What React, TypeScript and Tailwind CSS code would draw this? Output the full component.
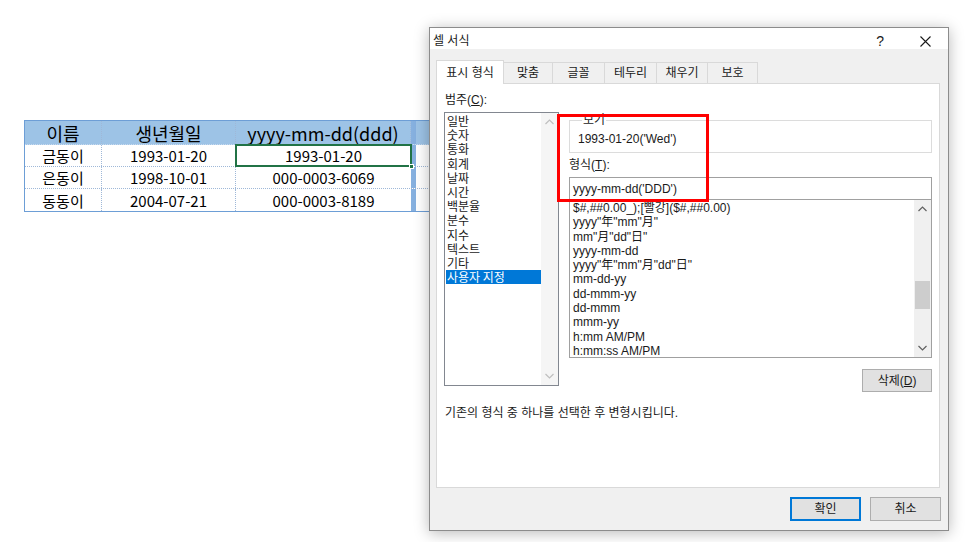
import type { ReactNode } from 'react';

const categories = ['일반', '숫자', '통화', '회계', '날짜', '시간', '백분율', '분수', '지수', '텍스트', '기타', '사용자 지정'];
const formats = [
  '$#,##0.00_);[빨강]($#,##0.00)',
  'yyyy"年"mm"月"',
  'mm"月"dd"日"',
  'yyyy-mm-dd',
  'yyyy"年"mm"月"dd"日"',
  'mm-dd-yy',
  'dd-mmm-yy',
  'dd-mmm',
  'mmm-yy',
  'h:mm AM/PM',
  'h:mm:ss AM/PM',
];
const rows = [
  ['금동이', '1993-01-20', '1993-01-20'],
  ['은동이', '1998-10-01', '000-0003-6069'],
  ['동동이', '2004-07-21', '000-0003-8189'],
];
const tabs = ['맞춤', '글꼴', '테두리', '채우기', '보호'];
const tabWidths = ['w-[49px]', 'w-[52px]', 'w-[52px]', 'w-[51px]', 'w-[50px]'];

const sheetFont = { fontFamily: '"Noto Sans CJK KR", "Noto Sans", sans-serif' };
const uiFont = { fontFamily: '"Liberation Sans", "Noto Sans CJK KR", sans-serif' };

function Chevron({ up, dim }: { up?: boolean; dim?: boolean }) {
  return (
    <svg width="9" height="6" viewBox="0 0 9 6" className={dim ? 'text-[#bfbfbf]' : 'text-[#606060]'}>
      <polyline
        points={up ? '0.5,5 4.5,1 8.5,5' : '0.5,1 4.5,5 8.5,1'}
        fill="none"
        stroke="currentColor"
        strokeWidth="1.2"
      />
    </svg>
  );
}

function Cell({ w, children, last }: { w: string; children?: ReactNode; last?: boolean }) {
  return (
    <div
      className={`${w} flex h-full items-center justify-center ${
        last ? '' : 'border-r border-dotted border-[#9fb8d8]'
      }`}
    >
      {children}
    </div>
  );
}

function Sheet() {
  return (
    <div style={sheetFont} className="ml-[24px] pt-[120px] text-black">
      <div className="w-[406px] border-t border-l border-b border-[#6d9ed6]">
        <div className="flex h-[24px] bg-[#9dc3e6] text-[18px] leading-none border-b border-dotted border-[#c9dbef]">
          <Cell w="w-[77px]">이름</Cell>
          <Cell w="w-[134px]">생년월일</Cell>
          <Cell w="w-[175px]">yyyy-mm-dd(ddd)</Cell>
          <div className="h-full w-[5px] bg-[#86b0df]" />
          <Cell w="w-[14px]" last />
        </div>
        {rows.map((r, i) => (
          <div
            key={r[0]}
            className={`flex h-[22px] text-[15px] leading-none ${
              i < 2 ? 'border-b border-dotted border-[#9fb8d8]' : ''
            }`}
          >
            <Cell w="w-[77px]">{r[0]}</Cell>
            <Cell w="w-[134px]">{r[1]}</Cell>
            <div className="relative flex h-full w-[175px] items-center justify-center">
              {r[2]}
              {i === 0 && (
                <>
                  <div className="absolute -top-[1px] -left-[1px] -right-[1px] -bottom-[1px] border-2 border-[#217346]" />
                  <div className="absolute -right-[3px] -bottom-[3px] h-[5px] w-[5px] bg-[#217346] border border-white" />
                </>
              )}
            </div>
            <div className="h-full w-[5px] bg-[#86b0df]" />
            <Cell w="w-[14px]" last />
          </div>
        ))}
      </div>
    </div>
  );
}

function Dialog() {
  return (
    <div
      style={uiFont}
      className="absolute left-[429px] top-[27px] flex h-[504px] w-[520px] flex-col border border-[#8c8c8c] bg-[#f0f0f0] text-[12px] text-[#1a1a1a] shadow-[0_2px_14px_rgba(0,0,0,0.28)]"
    >
      <div className="flex h-[21px] items-end bg-white pl-[3px]">
        <span className="leading-[15px]">셀 서식</span>
        <span className="ml-auto mr-[36px] text-[14px] leading-[16px]">?</span>
        <svg width="11" height="11" viewBox="0 0 11 11" className="mr-[17px] mb-[2px]">
          <path d="M0.5 0.5 L10.5 10.5 M10.5 0.5 L0.5 10.5" stroke="#1a1a1a" strokeWidth="1.1" />
        </svg>
      </div>

      <div className="mt-[11px] ml-[6px] mr-[8px] flex items-end">
        <div className="relative z-10 -mb-[1px] flex h-[24px] w-[68px] items-center justify-center border border-b-0 border-[#d9d9d9] bg-white pt-[1px]">
          표시 형식
        </div>
        {tabs.map((t, i) => (
          <div
            key={t}
            className={`${tabWidths[i]} flex h-[21px] items-center justify-center border border-b-0 border-l-0 border-[#d9d9d9] bg-[#f0f0f0]`}
          >
            {t}
          </div>
        ))}
      </div>

      <div className="ml-[6px] mr-[8px] h-[405px] border border-[#d9d9d9] bg-white pl-[7px]">
        <div className="flex">
          <div className="flex w-[115px] flex-col">
            <div className="mt-[9px] ml-[1px] leading-[15px]">
              범주(<span className="underline">C</span>):
            </div>
            <div className="mt-[4px] flex h-[274px] border border-[#828790]">
              <div style={{ fontFamily: '"Noto Sans CJK KR", sans-serif' }} className="flex-1 pt-[1px] pl-[1px]">
                {categories.map((c, i) => (
                  <div
                    key={c}
                    className={`h-[14.2px] pl-[1px] leading-[14.2px] ${
                      i === categories.length - 1 ? 'bg-[#0078d7] text-white' : ''
                    }`}
                  >
                    {c}
                  </div>
                ))}
              </div>
              <div className="flex w-[17px] flex-col items-center justify-between bg-[#f5f5f5] py-[6px]">
                <Chevron up dim />
                <Chevron dim />
              </div>
            </div>
          </div>

          <div className="ml-[10px] flex w-[363px] flex-col">
            <fieldset className="mt-[30px] h-[39px] border border-[#dcdcdc] pl-[8px]">
              <legend className="ml-[4px] px-[1px] leading-[12px]">보기</legend>
              <div className="mt-[6px] leading-[15px]">1993-01-20('Wed')</div>
            </fieldset>
            <div className="mt-[5px] leading-[15px]">
              형식(<span className="underline">T</span>):
            </div>
            <div className="mt-[4px] flex h-[23px] items-center border border-[#a0a0a0] pl-[3px]">
              yyyy-mm-dd('DDD')
            </div>
            <div className="flex h-[158px] border border-[#a0a0a0] border-t-0">
              <div className="flex-1 pt-[1px] pl-[3px]">
                {formats.map((f) => (
                  <div key={f} className="h-[14.3px] leading-[14.3px] whitespace-nowrap">
                    {f}
                  </div>
                ))}
              </div>
              <div className="flex w-[17px] flex-col items-center bg-[#f0f0f0] py-[6px]">
                <Chevron up />
                <div className="mt-[69px] h-[28px] w-[15px] bg-[#cdcdcd]" />
                <div className="mt-auto">
                  <Chevron />
                </div>
              </div>
            </div>
            <div className="mt-[11px] flex justify-end">
              <div className="flex h-[23px] w-[70px] items-center justify-center border border-[#adadad] bg-[#e1e1e1]">
                삭제(<span className="underline">D</span>)
              </div>
            </div>
          </div>
        </div>
        <div className="mt-[14px] pl-[1px] leading-[15px]">기존의 형식 중 하나를 선택한 후 변형시킵니다.</div>
      </div>

      <div className="mt-[9px] mr-[7px] flex justify-end gap-[9px]">
        <div className="flex h-[24px] w-[71px] items-center justify-center border-2 border-[#0078d7] bg-[#e1e1e1]">
          확인
        </div>
        <div className="flex h-[24px] w-[71px] items-center justify-center border border-[#adadad] bg-[#e1e1e1]">
          취소
        </div>
      </div>

      <div className="pointer-events-none absolute left-[127px] top-[86px] h-[88px] w-[152px] border-[3px] border-[#ff0000]" />
    </div>
  );
}

export default function App() {
  return (
    <div className="relative h-[542px] w-[966px] overflow-hidden bg-white">
      <Sheet />
      <Dialog />
    </div>
  );
}
